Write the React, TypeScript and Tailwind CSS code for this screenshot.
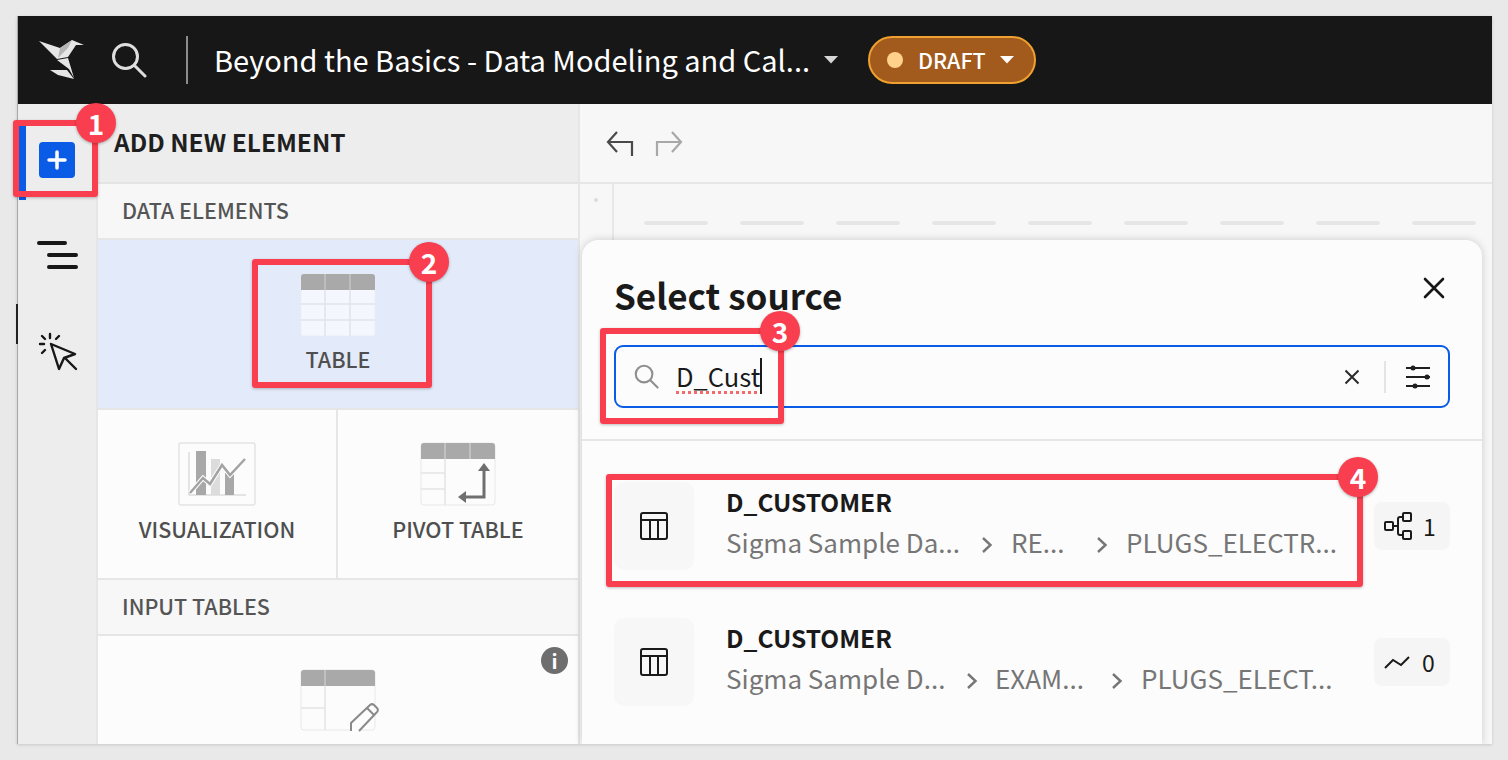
const font = '"Noto Sans CJK JP", "Noto Sans", sans-serif'

function Logo() {
    return (
        <svg width="46" height="40" viewBox="0 0 46 40" className="block">
            <path d="M0 1 L21 8 L33 0 L45 5 L37 5 L29 17 L18 19 Z" fill="#e6e6e6" />
            <path d="M21 8 L33 0 L29 8 L19 18 Z" fill="#b5b5b5" />
            <path d="M18 20 L29 18 L35 38 L30 29 Z" fill="#e6e6e6" />
            <path d="M11 30 L28 30 L35 39 L19 35 Z" fill="#e6e6e6" />
        </svg>
    )
}

function SearchIcon({ size, stroke, width }: { size: number; stroke: string; width: number }) {
    return (
        <svg width={size} height={size} viewBox="0 0 36 36" fill="none" stroke={stroke} strokeWidth={width} strokeLinecap="round">
            <circle cx="14.5" cy="14.5" r="12" />
            <path d="M23.5 23.5 L34 34" />
        </svg>
    )
}

function Caret({ color }: { color: string }) {
    return (
        <svg width="14" height="8" viewBox="0 0 14 8"><path d="M0 0 H14 L7 7.5 Z" fill={color} /></svg>
    )
}

function TableGlyph() {
    return (
        <svg width="30" height="30" viewBox="0 0 30 30" fill="none" stroke="#1a1a1a" strokeWidth="2">
            <rect x="2" y="2" width="26" height="26" rx="2" />
            <path d="M2 9 H28 M11 9 V28 M19 9 V28" />
        </svg>
    )
}

function ChevronSeg() {
    return (
        <svg className="mt-[6px] ml-[6px]" width="12" height="18" viewBox="0 0 12 18" fill="none" stroke="#767676" strokeWidth="2.4">
            <path d="M2 2 L9.5 9 L2 16" />
        </svg>
    )
}

function Crumb({ text, width }: { text: string; width: string }) {
    return <span className={`${width} whitespace-nowrap text-[26px] leading-[36px] text-[#767676]`}>{text}</span>
}

function TileLabel({ children }: { children: string }) {
    return <span className="text-[21.5px] leading-[30px] font-medium text-[#4f4f4f]">{children}</span>
}

function SectionHead({ children, h }: { children: string; h: string }) {
    return (
        <div className={`${h} shrink-0 flex items-center pl-[24px] pb-[1px] bg-[#f7f7f7] border-b-2 border-[#e6e6e6] text-[21.5px] font-medium text-[#555555]`}>
            {children}
        </div>
    )
}

function TableIcon() {
    return (
        <svg width="76" height="64" viewBox="0 0 76 64">
            <rect x="1" y="1" width="74" height="62" rx="3" fill="#f4f7fd" stroke="#e9edf5" />
            <path d="M1 17 V4 a3 3 0 0 1 3-3 H72 a3 3 0 0 1 3 3 V17 Z" fill="#a9a9a9" />
            <path d="M25 1 V17 M50 1 V17" stroke="#c4c4c4" strokeWidth="1.5" />
            <path d="M1 31 H75 M1 47 H75 M25 17 V63 M50 17 V63" stroke="#dfe4ee" strokeWidth="1.5" />
        </svg>
    )
}

function VizIcon() {
    return (
        <svg width="78" height="64" viewBox="0 0 78 64">
            <rect x="1" y="1" width="76" height="62" rx="2" fill="#fcfcfc" stroke="#e4e4e4" strokeWidth="1.5" />
            <path d="M11 10 V53 H68" fill="none" stroke="#dcdcdc" strokeWidth="1.5" />
            <rect x="18" y="9" width="10" height="44" fill="#a8a8a8" />
            <rect x="33" y="17" width="9" height="36" fill="#dcdcdc" />
            <rect x="47" y="31" width="9" height="22" fill="#a8a8a8" />
            <path d="M12 51 L25 36 L32 42 L44 23 L52 33 L67 17" fill="none" stroke="#ffffff" strokeWidth="4.5" />
            <path d="M12 51 L25 36 L32 42 L44 23 L52 33 L67 17" fill="none" stroke="#a3a3a3" strokeWidth="2.5" />
        </svg>
    )
}

function PivotIcon() {
    return (
        <svg width="76" height="64" viewBox="0 0 76 64">
            <rect x="1" y="1" width="74" height="62" rx="3" fill="#fcfcfc" stroke="#e8e8e8" />
            <path d="M1 17 V4 a3 3 0 0 1 3-3 H72 a3 3 0 0 1 3 3 V17 Z" fill="#a9a9a9" />
            <path d="M25 1 V17 M50 1 V17" stroke="#c9c9c9" strokeWidth="1.5" />
            <path d="M25 17 V63 M1 31 H25 M1 47 H25" stroke="#e4e4e4" strokeWidth="1.5" />
            <path d="M64 24 V55 H43" fill="none" stroke="#6f6f6f" strokeWidth="3" />
            <path d="M58 29 L64 21 L70 29 Z M46 49 L38 55 L46 61 Z" fill="#6f6f6f" />
        </svg>
    )
}

function InputIcon() {
    return (
        <svg width="80" height="66" viewBox="0 0 80 66">
            <rect x="1" y="1" width="74" height="60" rx="3" fill="#fcfcfc" stroke="#e8e8e8" />
            <path d="M1 17 V4 a3 3 0 0 1 3-3 H72 a3 3 0 0 1 3 3 V17 Z" fill="#a9a9a9" />
            <path d="M25 1 V17" stroke="#c9c9c9" strokeWidth="1.5" />
            <path d="M25 17 V61 M1 39 H25" stroke="#e4e4e4" strokeWidth="1.5" />
            <path d="M51 62 V54 L70 36 a3 3 0 0 1 4 0 L77 39 a3 3 0 0 1 0 4 L59 62" fill="#fcfcfc" stroke="#8a8a8a" strokeWidth="2" />
            <path d="M67 39 L74 46" stroke="#8a8a8a" strokeWidth="2" />
        </svg>
    )
}

function Note({ n, className }: { n: number; className: string }) {
    return (
        <div className={`absolute w-10 h-10 rounded-full bg-[#f93e4f] shadow-[0_1px_3px_rgba(0,0,0,0.3)] flex items-center justify-center text-white text-[28px] font-bold leading-none ${className}`}>
            {n}
        </div>
    )
}

function Mark({ className }: { className: string }) {
    return <div className={`absolute border-[6px] border-[#f93e4f] rounded-[3px] shadow-[0_1px_3px_rgba(0,0,0,0.25)] ${className}`} />
}

function SourceRow({ top, crumbs, badge }: { top: string; crumbs: { t: string; w: string; gap: string }[]; badge: React.ReactNode }) {
    return (
        <div className={`flex items-start pl-[32px] pr-[32px] ${top}`}>
            <div className="w-[80px] h-[88px] shrink-0 rounded-[10px] bg-[#f7f7f7] flex items-center justify-center">
                <TableGlyph />
            </div>
            <div className="ml-[32px] flex-1 min-w-0">
                <div className="text-[24.5px] leading-[32px] font-semibold text-[#1a1a1a] mt-[4px]">D_CUSTOMER</div>
                <div className="flex items-center mt-[6px]">
                    {crumbs.map(c => (
                        <div key={c.t} className="flex items-center">
                            <Crumb text={c.t} width={c.w} />
                            {c.gap !== "" && <div className={`flex justify-center ${c.gap}`}><ChevronSeg /></div>}
                        </div>
                    ))}
                </div>
            </div>
            <div className="w-[76px] h-[48px] mt-[20px] shrink-0 rounded-[8px] bg-[#f5f5f5] flex items-center pl-[10px] text-[23px] text-[#1a1a1a]">
                {badge}
            </div>
        </div>
    )
}

export default function App() {
    return (
        <div className="relative w-[1508px] h-[760px] overflow-hidden bg-[#e9e9e9]" style={{ fontFamily: font }}>
            <div className="absolute left-[17px] top-[16px] w-[1475px] h-[728px] flex flex-col overflow-hidden border-l border-[#a8a8a8] shadow-[0_1px_3px_rgba(0,0,0,0.15)] bg-[#fcfcfc]">

                {/* Top bar */}
                <div className="h-[88px] shrink-0 bg-[#171717] flex items-center">
                    <div className="ml-[21px]"><Logo /></div>
                    <div className="ml-[26px]"><SearchIcon size={36} stroke="#dedede" width={3} /></div>
                    <div className="ml-[39px] w-[2px] h-[48px] bg-[#8c8c8c]" />
                    <div className="ml-[26px] w-[596px] whitespace-nowrap text-[29px] leading-[40px] text-white -mt-[3px]">Beyond the Basics - Data Modeling and Cal...</div>
                    <div className="ml-[14px] -mt-[1px]"><Caret color="#d6d6d6" /></div>
                    <div className="ml-[30px] w-[168px] h-[48px] rounded-full border-2 border-[#f0a030] bg-[#a25a1d] flex items-center pl-[17px]">
                        <div className="w-4 h-4 rounded-full bg-[#ffd18a]" />
                        <span className="ml-[15px] text-[21.5px] font-medium text-white">DRAFT</span>
                        <div className="ml-[14px]"><Caret color="#ffffff" /></div>
                    </div>
                </div>

                <div className="flex-1 flex min-h-0">
                    {/* Left rail */}
                    <div className="w-[80px] shrink-0 bg-[#ededed] border-r-2 border-[#e6e6e6] relative flex flex-col">
                        <div className="h-[75px] mt-[21px] ml-[1px] pt-[17px] pl-[13px] border-l-[7px] border-[#0a5ce6] shrink-0">
                            <div className="w-9 h-9 rounded-[4px] bg-[#0a5ce6] flex items-center justify-center">
                                <svg width="20" height="20" viewBox="0 0 20 20" stroke="#fff" strokeWidth="3.5" strokeLinecap="round"><path d="M10 2 V18 M2 10 H18" /></svg>
                            </div>
                        </div>
                        <div className="ml-[19px] mt-[40px]">
                            <svg width="42" height="30" viewBox="0 0 42 30" stroke="#171717" strokeWidth="4" strokeLinecap="round"><path d="M2 3 H28 M12 15 H39 M12 27 H39" /></svg>
                        </div>
                        <div className="ml-[20px] mt-[62px]">
                            <svg width="42" height="42" viewBox="0 0 42 42" fill="none" stroke="#171717" strokeWidth="2.4" strokeLinecap="round" strokeLinejoin="round">
                                <path d="M13 12 L37 22 L26 26 L21 37 Z M27 26 L38 37" />
                                <path d="M12 2 V6 M2 12 H6 M4 4 L7 7 M21 4 L18 7 M4 21 L7 18" />
                            </svg>
                        </div>
                    </div>

                    {/* Add element panel */}
                    <div className="w-[482px] shrink-0 flex flex-col bg-[#fcfcfc] border-r-2 border-[#e6e6e6] overflow-hidden">
                        <div className="h-[80px] shrink-0 bg-[#ededed] border-b-2 border-[#e4e4e4] flex items-center pl-[16px] pb-[1px] text-[24.5px] font-semibold text-[#1f1f1f]">
                            ADD NEW ELEMENT
                        </div>
                        <SectionHead h="h-[56px]">DATA ELEMENTS</SectionHead>
                        <div className="h-[170px] shrink-0 bg-[#e3eaf9] flex flex-col items-center pt-[33px] border-b-2 border-[#e6e6e6]">
                            <TableIcon />
                            <div className="mt-[7px]"><TileLabel>TABLE</TileLabel></div>
                        </div>
                        <div className="h-[170px] shrink-0 flex border-b-2 border-[#e6e6e6]">
                            <div className="w-[240px] border-r-2 border-[#e6e6e6] flex flex-col items-center pt-[32px]">
                                <VizIcon />
                                <div className="mt-[8px]"><TileLabel>VISUALIZATION</TileLabel></div>
                            </div>
                            <div className="flex-1 flex flex-col items-center pt-[32px]">
                                <PivotIcon />
                                <div className="mt-[8px]"><TileLabel>PIVOT TABLE</TileLabel></div>
                            </div>
                        </div>
                        <SectionHead h="h-[56px]">INPUT TABLES</SectionHead>
                        <div className="relative flex-1 flex justify-center pt-[33px] pl-[4px]">
                            <InputIcon />
                            <div className="absolute right-[10px] top-[11px] w-[27px] h-[27px] rounded-full bg-[#6e6e6e] flex items-center justify-center text-white text-[20px] font-bold leading-none">i</div>
                        </div>
                    </div>

                    {/* Canvas */}
                    <div className="relative flex-1 min-w-0 flex flex-col bg-[#f7f7f7]">
                        <div className="h-[80px] shrink-0 border-b-2 border-[#e6e6e6] flex items-center pl-[26px] gap-[21px]">
                            <svg width="28" height="28" viewBox="0 0 28 28" fill="none" stroke="#4a4a4a" strokeWidth="2.2"><path d="M26 27 V13 H3 M11 3 L2 13 L11 23" /></svg>
                            <svg width="28" height="28" viewBox="0 0 28 28" fill="none" stroke="#a8a8a8" strokeWidth="2.2"><path d="M2 27 V13 H25 M17 3 L26 13 L17 23" /></svg>
                        </div>
                        <div className="flex-1 flex min-w-0 overflow-hidden">
                            <div className="w-[34px] shrink-0 border-r-2 border-[#e8e8e8] flex justify-center pt-[14px]">
                                <div className="w-1 h-1 rounded-full bg-[#dcdcdc]" />
                            </div>
                            <div className="flex-1 flex gap-[32px] pl-[30px] pt-[37px] pr-[16px]">
                                {Array.from({ length: 9 }).map((_, i) => (
                                    <div key={i} className="w-[64px] h-[4px] shrink-0 rounded-full bg-[#e6e6e6]" />
                                ))}
                            </div>
                        </div>

                        {/* Select source dialog */}
                        <div className="absolute left-[2px] right-[10px] top-[136px] bottom-0 rounded-t-[16px] bg-[#fcfcfc] shadow-[0_0_8px_rgba(0,0,0,0.18)] flex flex-col">
                            <div className="relative h-[201px] shrink-0 border-b-2 border-[#e6e6e6]">
                                <h2 className="absolute left-[32px] top-[28px] text-[35px] leading-[54px] font-semibold text-[#1a1a1a]">Select source</h2>
                                <svg className="absolute right-[37px] top-[37px]" width="22" height="22" viewBox="0 0 22 22" stroke="#171717" strokeWidth="2.6" strokeLinecap="round"><path d="M2 2 L20 20 M20 2 L2 20" /></svg>
                                <div className="absolute left-[32px] right-[32px] top-[105px] h-[63px] rounded-[9px] border-2 border-[#0a5ce6] flex items-center">
                                    <div className="ml-[18px] flex"><SearchIcon size={25} stroke="#8f8f8f" width={3} /></div>
                                    <div className="relative ml-[17px] text-[25.5px] leading-[36px] text-[#1a1a1a] h-[50px] flex items-center -mt-[1px]">
                                        <span className="underline decoration-dotted decoration-[#f46a6a] decoration-[3px] underline-offset-[4px]">D_Cust</span>
                                        <span className="w-[2px] h-[36px] bg-[#1a1a1a]" />
                                    </div>
                                    <div className="ml-auto flex items-center">
                                        <svg width="16" height="16" viewBox="0 0 16 16" stroke="#2a2a2a" strokeWidth="2"><path d="M1.5 1.5 L14.5 14.5 M14.5 1.5 L1.5 14.5" /></svg>
                                        <div className="ml-[24px] w-[2px] h-[32px] bg-[#e4e4e4]" />
                                        <svg className="ml-[20px] mr-[18px]" width="24" height="26" viewBox="0 0 24 26" stroke="#1f1f1f" strokeWidth="2" fill="#1f1f1f">
                                            <path d="M0 4 H24 M0 13 H24 M0 22 H24" />
                                            <circle cx="7" cy="4" r="2.5" stroke="none" />
                                            <circle cx="21" cy="13" r="2.5" stroke="none" />
                                            <circle cx="9" cy="22" r="2.5" stroke="none" />
                                        </svg>
                                    </div>
                                </div>
                            </div>
                            <SourceRow
                                top="mt-[41px]"
                                crumbs={[
                                    { t: "Sigma Sample Da...", w: "w-[230px]", gap: "w-[55px]" },
                                    { t: "RE...", w: "w-[60px]", gap: "w-[55px]" },
                                    { t: "PLUGS_ELECTR...", w: "w-[210px]", gap: "" },
                                ]}
                                badge={
                                    <>
                                        <svg width="28" height="28" viewBox="0 0 28 28" fill="none" stroke="#1a1a1a" strokeWidth="2">
                                            <rect x="1" y="10" width="8" height="8" rx="1" />
                                            <rect x="19" y="1" width="8" height="8" rx="1" />
                                            <rect x="19" y="19" width="8" height="8" rx="1" />
                                            <path d="M9 14 H14 M19 5 H16 a2 2 0 0 0 -2 2 V21 a2 2 0 0 0 2 2 H19" />
                                        </svg>
                                        <span className="ml-[11px]">1</span>
                                    </>
                                }
                            />
                            <SourceRow
                                top="mt-[48px]"
                                crumbs={[
                                    { t: "Sigma Sample D...", w: "w-[216px]", gap: "w-[53px]" },
                                    { t: "EXAM...", w: "w-[92px]", gap: "w-[54px]" },
                                    { t: "PLUGS_ELECT...", w: "w-[196px]", gap: "" },
                                ]}
                                badge={
                                    <>
                                        <svg width="26" height="14" viewBox="0 0 26 14" fill="none" stroke="#1a1a1a" strokeWidth="2"><path d="M1 13 L9 5 L17 10 L25 2" /></svg>
                                        <span className="ml-[12px]">0</span>
                                    </>
                                }
                            />
                        </div>
                    </div>
                </div>
            </div>

            {/* Window edge marks */}
            <div className="absolute left-[16px] top-[304px] w-[2px] h-[40px] bg-[#222222]" />

            {/* Tutorial annotations */}
            <Mark className="left-[13px] top-[120px] w-[85px] h-[77px]" />
            <Mark className="left-[252px] top-[259px] w-[180px] h-[129px]" />
            <Mark className="left-[600px] top-[328px] w-[184px] h-[96px]" />
            <Mark className="left-[606px] top-[474px] w-[757px] h-[113px]" />
            <Note n={1} className="left-[76px] top-[103px]" />
            <Note n={2} className="left-[409px] top-[242px]" />
            <Note n={3} className="left-[760px] top-[311px]" />
            <Note n={4} className="left-[1338px] top-[457px]" />
        </div>
    )
}
